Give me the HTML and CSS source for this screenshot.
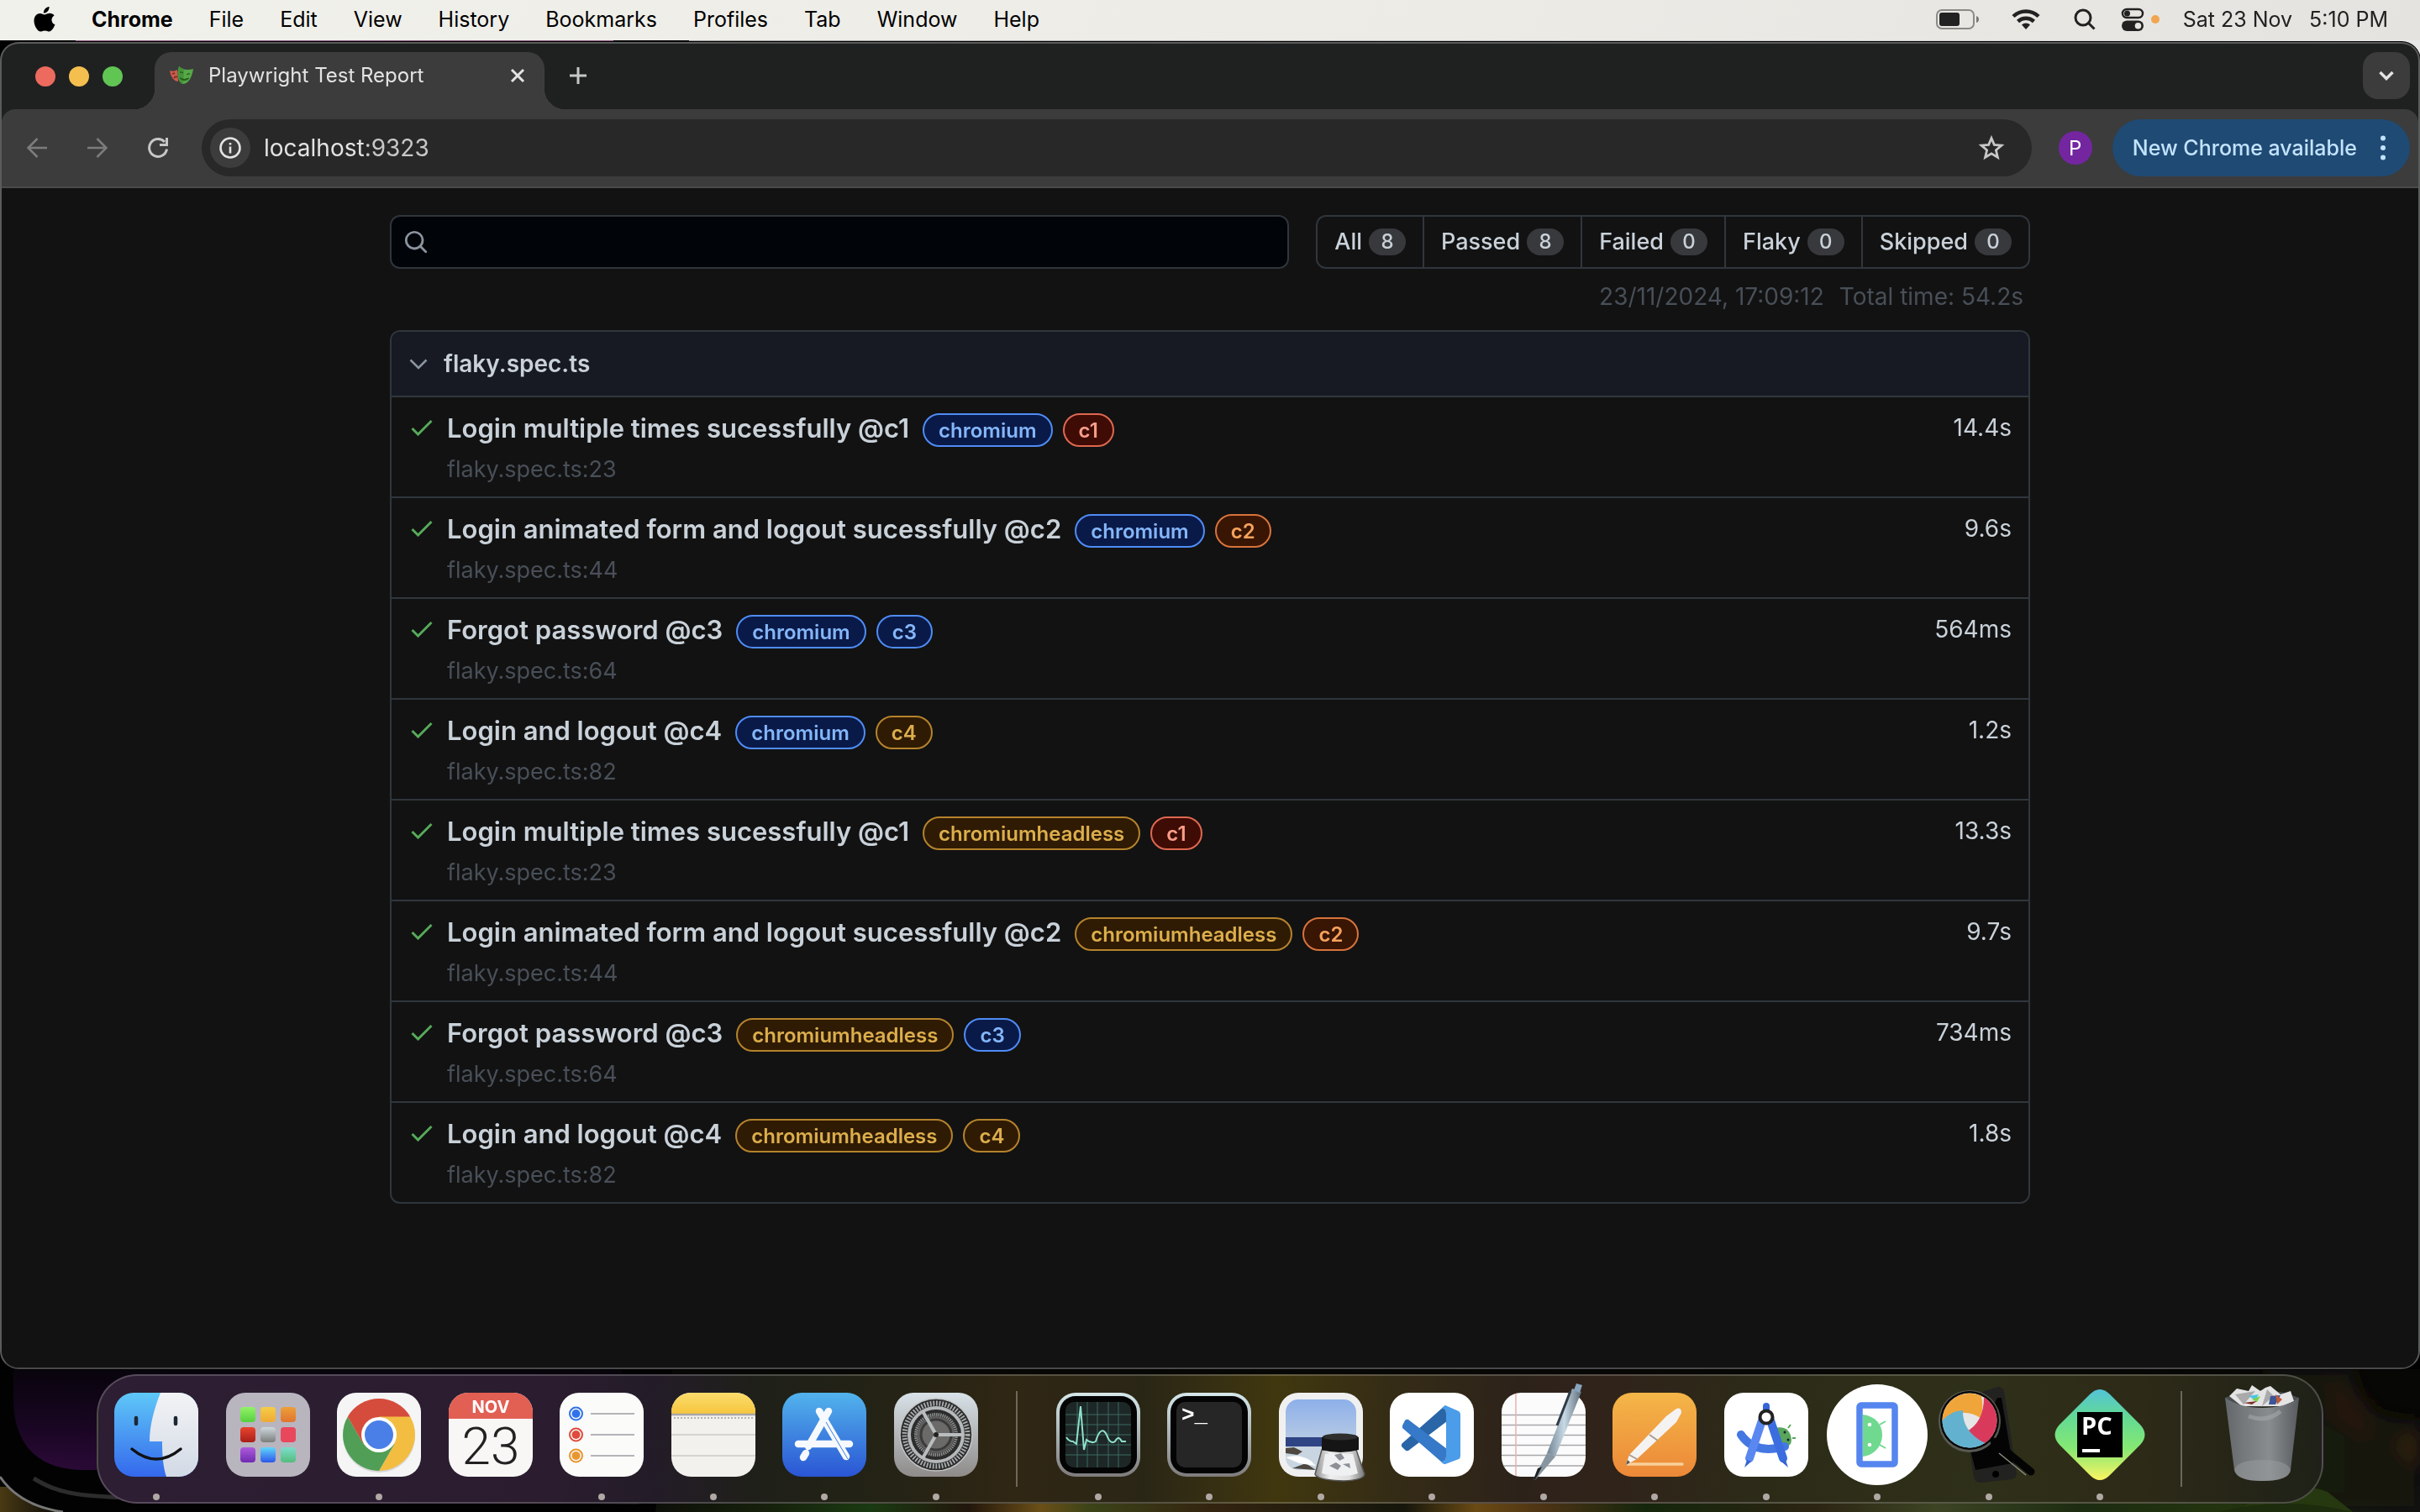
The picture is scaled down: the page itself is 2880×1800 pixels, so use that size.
FILE: index.html
```html
<!DOCTYPE html>
<html lang="en">
<head>
<meta charset="utf-8">
<title>Playwright Test Report</title>
<link rel="stylesheet" href="styles.css">
</head>
<body>
<div class="wallpaper" aria-hidden="true">
  <svg class="wallpaper-bottom" viewBox="0 0 2880 170" preserveAspectRatio="none">
    <defs>
      <linearGradient id="forest"><stop offset="0" stop-color="#4a3a14"/><stop offset=".02" stop-color="#15120a"/><stop offset=".27" stop-color="#0d0f08"/><stop offset=".32" stop-color="#16220c"/><stop offset=".36" stop-color="#1a3a12"/><stop offset=".4" stop-color="#22160c"/><stop offset=".43" stop-color="#6b4f18"/><stop offset=".45" stop-color="#3c4418"/><stop offset=".5" stop-color="#33240f"/><stop offset=".58" stop-color="#15160c"/><stop offset=".61" stop-color="#6a4a14"/><stop offset=".64" stop-color="#4a3214"/><stop offset=".68" stop-color="#14260c"/><stop offset=".75" stop-color="#2c2412"/><stop offset=".8" stop-color="#3c4424"/><stop offset=".86" stop-color="#1c2c10"/><stop offset=".92" stop-color="#22340f"/><stop offset="1" stop-color="#0c0c0a"/></linearGradient>
      <radialGradient id="plum" cx=".05" cy="1" r="1"><stop offset="0" stop-color="#2c0a38"/><stop offset=".4" stop-color="#1a0624"/><stop offset="1" stop-color="#08040c"/></radialGradient>
      <filter id="soft"><feGaussianBlur stdDeviation="10"/></filter>
    </defs>
    <rect width="2880" height="170" fill="#070706"/>
    <rect y="140" width="2880" height="30" fill="url(#forest)"/>
    <path d="M0 0H800L780 170H75C40 165 15 150 0 128Z" fill="#020202"/>
    <path d="M0 128C15 150 40 165 75 170" fill="none" stroke="#777" stroke-width="3"/>
    <path d="M40 130C70 148 90 153 200 154L760 158" fill="none" stroke="#2c2c2c" stroke-width="5"/>
    <path d="M16 0V40C18 95 50 120 100 120H740V0Z" fill="url(#plum)"/>
    <g filter="url(#soft)">
      <path d="M2700 0H2800C2810 40 2820 60 2880 60V170H2700Z" fill="#171408"/>
      <path d="M2755 60L2790 80L2790 150L2740 140Z" fill="#151c08"/>
      <path d="M2770 10L2820 40L2820 90L2775 60Z" fill="#221608"/>
      <path d="M2850 90L2880 70V120Z" fill="#30200c"/>
    </g>
    <path d="M2660 170Q2720 128 2770 146L2800 170Z" fill="#26380f"/>
    <path d="M2640 170Q2720 150 2800 170Z" fill="#1c2c0c"/>
  </svg>
</div>

<header class="menubar">
  <nav class="menus" aria-label="Menu bar">
    <button class="apple" aria-label="Apple menu"><svg width="26" height="32" viewBox="0 0 26 32"><path d="M18.6 1c.2 2-.6 3.900-1.800 5.300-1.200 1.400-3.100 2.400-4.900 2.300-.2-1.900.7-3.900 1.800-5.100C14.900 2.100 17 1.100 18.600 1zM24.600 11.500c-2 1.200-3.100 3-3.100 5.200 0 2.600 1.600 4.700 4 5.600-.9 2.500-3.700 8.200-7 8.200-1.800 0-2.700-1.100-5.100-1.100-2.500 0-3.400 1.100-5.100 1.100C4.700 30.500.5 23.600.5 17.700c0-5.700 3.500-8.800 7.100-8.800 2.300 0 4.200 1.500 5.600 1.500 1.300 0 3.500-1.600 6.200-1.600 2.100 0 4 .9 5.200 2.700z"/></svg></button>
    <button class="app-name">Chrome</button>
    <button>File</button><button>Edit</button><button>View</button><button>History</button><button>Bookmarks</button><button>Profiles</button><button>Tab</button><button>Window</button><button>Help</button>
  </nav>
  <div class="status">
    <svg class="battery" width="52" height="24" viewBox="0 0 52 24"><rect x="1" y="1" width="44" height="22" rx="6" fill="none" stroke="#8b8a87" stroke-width="2"/><rect x="4" y="4" width="24" height="16" rx="3" fill="#222"/><path d="M48 8q3 1 3 4t-3 4z" fill="#777"/></svg>
    <svg class="wifi" width="34" height="26" viewBox="0 0 34 26"><g fill="none" stroke="#222" stroke-width="4.500"><path d="M2 9.500A21.500 21.500 0 0 1 32 9.500"/><path d="M7.500 15.500A14 14 0 0 1 26.500 15.500"/></g><path d="M17 25l-5-5.500a7.500 7.500 0 0 1 10 0z" fill="#222"/></svg>
    <svg class="find" width="26" height="26" viewBox="0 0 26 26" fill="none" stroke="#222" stroke-width="3"><circle cx="11" cy="11" r="9"/><path d="M17.500 17.500L24.500 24.500"/></svg>
    <svg class="control" width="28" height="28" viewBox="0 0 28 28"><rect x="2" y="2" width="24" height="10" rx="5" fill="none" stroke="#222" stroke-width="2.500"/><circle cx="7.500" cy="7" r="3.500" fill="#222"/><rect x="1" y="15.500" width="26" height="12.500" rx="6.200" fill="#222"/><circle cx="20.500" cy="21.700" r="3.800" fill="#e6e5e1"/></svg>
    <span class="mic-dot"></span>
    <time class="clock"><span>Sat 23 Nov</span><span>5:10 PM</span></time>
  </div>
</header>

<div class="window">
  <div class="tabstrip">
    <div class="lights"><button class="light red" aria-label="Close"></button><button class="light amber" aria-label="Minimise"></button><button class="light green" aria-label="Zoom"></button></div>
    <div class="tab">
      <svg width="28" height="22" viewBox="0 0 28 22"><path d="M0 5c3 1 6 1 9-1l1 14c-5 0-9-6-10-13z" fill="#cd5a4b"/><path d="M3 9l3-1M5 14q2-3 4-1" stroke="#6b2a24" fill="none" stroke-width="1.500"/><path d="M11 0c4 4 10 5 17 3-1 9-6 18-12 18-6-1-8-12-5-21z" fill="#57a847"/><path d="M11 0c2 2 4 3 6 3l-1 18c-6-1-8-12-5-21z" fill="#47913a"/><path d="M12 7q2-1 4 1M20 10q2-2 4-1M12 14q5 3 11 0q-5 5-11 0z" stroke="#1f5a1c" fill="#1f5a1c" stroke-width="1"/></svg>
      <span class="tab-title">Playwright Test Report</span>
      <button class="tab-close" aria-label="Close tab"><svg width="18" height="18" viewBox="0 0 18 18" stroke="#e3e3e3" stroke-width="3"><path d="M2 2L16 16M16 2L2 16"/></svg></button>
    </div>
    <button class="new-tab" aria-label="New tab"><svg width="20" height="20" viewBox="0 0 20 20" stroke="#c7c7c7" stroke-width="3"><path d="M10 0V20M0 10H20"/></svg></button>
    <button class="tab-search" aria-label="Search tabs"><svg width="18" height="12" viewBox="0 0 18 12" fill="none" stroke="#e3e3e3" stroke-width="3.500"><path d="M1.500 2L9 9.500L16.500 2"/></svg></button>
  </div>
  <div class="toolbar">
    <div class="nav-buttons">
      <button aria-label="Back"><svg width="24" height="24" viewBox="0 0 24 24" fill="none" stroke="#7c7c7c" stroke-width="2.600"><path d="M24 12H2M12.500 1L1.500 12L12.500 23"/></svg></button>
      <button aria-label="Forward"><svg width="24" height="24" viewBox="0 0 24 24" fill="none" stroke="#7c7c7c" stroke-width="2.600"><path d="M0 12H22M11.500 1L22.500 12L11.500 23"/></svg></button>
      <button aria-label="Reload"><svg width="24" height="24" viewBox="0 0 24 24"><path d="M22.500 13.500A10.500 10.500 0 1 1 20 5" fill="none" stroke="#c7c7c7" stroke-width="3"/><path d="M24 0V10H14V7H21V0z" fill="#c7c7c7"/></svg></button>
    </div>
    <div class="urlbar">
      <button class="site-info" aria-label="View site information"><svg width="26" height="26" viewBox="0 0 26 26" fill="none" stroke="#e3e3e3" stroke-width="2.600"><circle cx="13" cy="13" r="11.500"/><path d="M13 11.500V19.500M13 7V9.600"/></svg></button>
      <a class="url" href="http://localhost:9323">localhost<span>:9323</span></a>
      <button class="star" aria-label="Bookmark this tab"><svg width="32" height="32" viewBox="0 0 32 32" fill="none" stroke="#c7c7c7" stroke-width="2.800"><path d="M16 4.500L19.300 12.400L28 13.100L21.400 18.800L23.400 27.300L16 22.800L8.600 27.300L10.600 18.800L4 13.100L12.700 12.400Z"/></svg></button>
    </div>
    <button class="avatar">P</button>
    <button class="update">New Chrome available<svg width="6" height="30" viewBox="0 0 6 30" fill="#c2e3ff"><circle cx="3" cy="3.500" r="3"/><circle cx="3" cy="15" r="3"/><circle cx="3" cy="26.500" r="3"/></svg></button>
  </div>

  <main class="page">
    <div class="report">
      <div class="report-top">
        <label class="search">
          <svg width="30" height="30" viewBox="0 0 16 16" fill="#8b949e"><path d="M10.680 11.740a6 6 0 0 1-7.922-8.982 6 6 0 0 1 8.982 7.922l3.040 3.040a.749.749 0 0 1-1.060 1.060ZM11.500 7a4.499 4.499 0 1 0-8.997 0A4.499 4.499 0 0 0 11.500 7Z"/></svg>
          <input type="search" aria-label="Search tests">
        </label>
        <nav class="filters" aria-label="Test status">
          <a href="#all">All<span class="counter">8</span></a>
          <a href="#passed">Passed<span class="counter">8</span></a>
          <a href="#failed">Failed<span class="counter">0</span></a>
          <a href="#flaky">Flaky<span class="counter">0</span></a>
          <a href="#skipped">Skipped<span class="counter">0</span></a>
        </nav>
      </div>
      <div class="stats"><span>23/11/2024, 17:09:12</span><span>Total time: 54.2s</span></div>

      <section class="chip">
        <button class="chip-header"><svg width="24" height="24" viewBox="0 0 24 24" fill="none" stroke="#8b949e" stroke-width="2.600"><path d="M2.500 7.500L12 17L21.500 7.500"/></svg>flaky.spec.ts</button>
        <ul class="tests">
          <li class="test"><svg class="check" viewBox="0 0 26 20"><path d="M1.500 11L8.500 18L24.500 2"/></svg><div class="test-body"><div class="test-title"><a href="#t1">Login multiple times sucessfully @c1</a><span class="label blue">chromium</span><span class="label red-label">c1</span></div><a class="path" href="#t1">flaky.spec.ts:23</a></div><span class="duration">14.4s</span></li>
          <li class="test"><svg class="check" viewBox="0 0 26 20"><path d="M1.500 11L8.500 18L24.500 2"/></svg><div class="test-body"><div class="test-title"><a href="#t2">Login animated form and logout sucessfully @c2</a><span class="label blue">chromium</span><span class="label orange">c2</span></div><a class="path" href="#t2">flaky.spec.ts:44</a></div><span class="duration">9.6s</span></li>
          <li class="test"><svg class="check" viewBox="0 0 26 20"><path d="M1.500 11L8.500 18L24.500 2"/></svg><div class="test-body"><div class="test-title"><a href="#t3">Forgot password @c3</a><span class="label blue">chromium</span><span class="label blue">c3</span></div><a class="path" href="#t3">flaky.spec.ts:64</a></div><span class="duration">564ms</span></li>
          <li class="test"><svg class="check" viewBox="0 0 26 20"><path d="M1.500 11L8.500 18L24.500 2"/></svg><div class="test-body"><div class="test-title"><a href="#t4">Login and logout @c4</a><span class="label blue">chromium</span><span class="label yellow">c4</span></div><a class="path" href="#t4">flaky.spec.ts:82</a></div><span class="duration">1.2s</span></li>
          <li class="test"><svg class="check" viewBox="0 0 26 20"><path d="M1.500 11L8.500 18L24.500 2"/></svg><div class="test-body"><div class="test-title"><a href="#t5">Login multiple times sucessfully @c1</a><span class="label yellow">chromiumheadless</span><span class="label red-label">c1</span></div><a class="path" href="#t5">flaky.spec.ts:23</a></div><span class="duration">13.3s</span></li>
          <li class="test"><svg class="check" viewBox="0 0 26 20"><path d="M1.500 11L8.500 18L24.500 2"/></svg><div class="test-body"><div class="test-title"><a href="#t6">Login animated form and logout sucessfully @c2</a><span class="label yellow">chromiumheadless</span><span class="label orange">c2</span></div><a class="path" href="#t6">flaky.spec.ts:44</a></div><span class="duration">9.7s</span></li>
          <li class="test"><svg class="check" viewBox="0 0 26 20"><path d="M1.500 11L8.500 18L24.500 2"/></svg><div class="test-body"><div class="test-title"><a href="#t7">Forgot password @c3</a><span class="label yellow">chromiumheadless</span><span class="label blue">c3</span></div><a class="path" href="#t7">flaky.spec.ts:64</a></div><span class="duration">734ms</span></li>
          <li class="test"><svg class="check" viewBox="0 0 26 20"><path d="M1.500 11L8.500 18L24.500 2"/></svg><div class="test-body"><div class="test-title"><a href="#t8">Login and logout @c4</a><span class="label yellow">chromiumheadless</span><span class="label yellow">c4</span></div><a class="path" href="#t8">flaky.spec.ts:82</a></div><span class="duration">1.8s</span></li>
        </ul>
      </section>
    </div>
  </main>
</div>

<footer class="dock">
  <button class="app running" aria-label="Finder"><svg viewBox="0 0 132 132">
    <defs><linearGradient id="fb" x2="0" y2="1"><stop stop-color="#5fc8f8"/><stop offset="1" stop-color="#3468ec"/></linearGradient><linearGradient id="fw" x2="0" y2="1"><stop stop-color="#f3f3f5"/><stop offset="1" stop-color="#d2dae6"/></linearGradient><clipPath id="tile"><rect x="16" y="16" width="100" height="100" rx="23"/></clipPath></defs>
    <g clip-path="url(#tile)"><rect x="16" y="16" width="100" height="100" fill="url(#fb)"/><path d="M71 16C64 34 58 54 58 74H73C73 90 74 104 78 116H116V16Z" fill="url(#fw)"/></g>
    <path d="M42 46V53M89 46V53" stroke="#1c2733" stroke-width="4.500" stroke-linecap="round"/><path d="M37 83Q66 107 95 83" fill="none" stroke="#111" stroke-width="3.500" stroke-linecap="round"/></svg></button>
  <button class="app" aria-label="Launchpad"><svg viewBox="0 0 132 132">
    <defs><linearGradient id="l1" x2="0" y2="1"><stop stop-color="#93f268"/><stop offset="1" stop-color="#56d03e"/></linearGradient><linearGradient id="l2" x2="0" y2="1"><stop stop-color="#f5cd46"/><stop offset="1" stop-color="#efa936"/></linearGradient><linearGradient id="l3" x2="0" y2="1"><stop stop-color="#eca03a"/><stop offset="1" stop-color="#e0742f"/></linearGradient><linearGradient id="l4" x2="0" y2="1"><stop stop-color="#e9442f"/><stop offset="1" stop-color="#a81f18"/></linearGradient><linearGradient id="l5" x2="0" y2="1"><stop stop-color="#cfd8dd"/><stop offset="1" stop-color="#7a7d7b"/></linearGradient><linearGradient id="l7" x2="0" y2="1"><stop stop-color="#ae5bdc"/><stop offset="1" stop-color="#6f2bb0"/></linearGradient><linearGradient id="l8" x2="0" y2="1"><stop stop-color="#5fd7fa"/><stop offset="1" stop-color="#2e55ea"/></linearGradient><linearGradient id="l9" x2="0" y2="1"><stop stop-color="#7fdccb"/><stop offset="1" stop-color="#52bd7c"/></linearGradient></defs>
    <rect x="16" y="16" width="100" height="100" rx="23" fill="#b8b5bf"/>
    <rect x="33" y="33" width="18" height="18" rx="4" fill="url(#l1)"/><rect x="57" y="33" width="18" height="18" rx="4" fill="url(#l2)"/><rect x="81" y="33" width="18" height="18" rx="4" fill="url(#l3)"/>
    <rect x="33" y="57" width="18" height="18" rx="4" fill="url(#l4)"/><rect x="57" y="57" width="18" height="18" rx="4" fill="url(#l5)"/><rect x="81" y="57" width="18" height="18" rx="4" fill="#e9475c"/>
    <rect x="33" y="81" width="18" height="18" rx="4" fill="url(#l7)"/><rect x="57" y="81" width="18" height="18" rx="4" fill="url(#l8)"/><rect x="81" y="81" width="18" height="18" rx="4" fill="url(#l9)"/></svg></button>
  <button class="app running" aria-label="Google Chrome"><svg viewBox="0 0 132 132">
    <rect x="16" y="16" width="100" height="100" rx="23" fill="#f5f5f6"/><circle cx="66" cy="68" r="43" fill="#bbb" opacity=".5"/>
    <path d="M66 66L28.800 44.500A43 43 0 0 1 103.200 44.500Z" fill="#d64c3c"/><path d="M66 44.500H103.200A43 43 0 0 1 66 109L84.600 76.700Z" fill="#f3bd42"/><path d="M28.800 44.500A43 43 0 0 0 66 109L84.600 76.700L47.400 76.700Z" fill="#519e57"/><path d="M28.800 44.500L47.400 76.700L66 44.500Z" fill="#d64c3c"/>
    <circle cx="66" cy="66" r="21" fill="#fff"/><circle cx="66" cy="66" r="17" fill="#4a7fe8"/></svg></button>
  <button class="app" aria-label="Calendar"><svg viewBox="0 0 132 132">
    <g clip-path="url(#tile)"><rect x="16" y="16" width="100" height="100" fill="#f8f7f5"/><rect x="16" y="16" width="100" height="31" fill="#e25f54"/></g>
    <text class="cal-month" x="66" y="40">NOV</text><text class="cal-day" x="66" y="101">23</text></svg></button>
  <button class="app running" aria-label="Reminders"><svg viewBox="0 0 132 132">
    <rect x="16" y="16" width="100" height="100" rx="23" fill="#fbfbfa"/><g stroke="#b4b3b8" stroke-width="2"><path d="M53 41H105M53 66H105M53 91H105"/></g>
    <g fill="none" stroke-width="2"><circle cx="35.500" cy="41" r="7.500" stroke="#2f72ea"/><circle cx="35.500" cy="66" r="7.500" stroke="#df4b3c"/><circle cx="35.500" cy="91" r="7.500" stroke="#e8962f"/></g><circle cx="35.500" cy="41" r="5" fill="#2f72ea"/><circle cx="35.500" cy="66" r="5" fill="#df4b3c"/><circle cx="35.500" cy="91" r="5" fill="#e8962f"/></svg></button>
  <button class="app running" aria-label="Notes"><svg viewBox="0 0 132 132">
    <defs><linearGradient id="nt" x2="0" y2="1"><stop stop-color="#fbdc6c"/><stop offset="1" stop-color="#f6c63e"/></linearGradient></defs>
    <g clip-path="url(#tile)"><rect x="16" y="16" width="100" height="100" fill="#f2f1ee"/><rect x="16" y="16" width="100" height="25" fill="url(#nt)"/><path d="M16 42H116" stroke="#a9a6a8" stroke-width="2.500"/><path d="M19 46H114" stroke="#b5b2ae" stroke-width="2" stroke-dasharray="2 2"/><path d="M16 66H116M16 91H116" stroke="#d6d4d1" stroke-width="2"/></g></svg></button>
  <button class="app running" aria-label="App Store"><svg viewBox="0 0 132 132">
    <defs><linearGradient id="as" x2="0" y2="1"><stop stop-color="#52b3ec"/><stop offset="1" stop-color="#2a55d4"/></linearGradient></defs>
    <rect x="16" y="16" width="100" height="100" rx="23" fill="url(#as)"/><g stroke="#f6f9fd" stroke-width="8.500" stroke-linecap="round"><path d="M60 38L92 92M35 77H96"/><path d="M71 38L47 80M44 88L41 93"/></g><path d="M68 51L94 95" stroke="#3f7fdf" stroke-width="1"/></svg></button>
  <button class="app running" aria-label="System Settings"><svg viewBox="0 0 132 132">
    <defs><linearGradient id="ss" x2="0" y2="1"><stop stop-color="#d8e2e8"/><stop offset="1" stop-color="#8e8b89"/></linearGradient></defs>
    <rect x="16" y="16" width="100" height="100" rx="23" fill="url(#ss)"/><circle cx="66" cy="66" r="43" fill="#2c2c2c"/><circle cx="66" cy="66" r="37.500" fill="none" stroke="#a9adae" stroke-width="6" stroke-dasharray="1.800 1.800"/><circle cx="66" cy="66" r="32" fill="none" stroke="#b5b9ba" stroke-width="4"/><circle cx="66" cy="66" r="22" fill="#5f5f5d"/><circle cx="66" cy="66" r="24" fill="none" stroke="#8d8f8f" stroke-width="4" stroke-dasharray="1.500 1"/><circle cx="66" cy="66" r="18" fill="#6b6a68" stroke="#3b3b3b" stroke-width="3"/><path d="M66 66H98M66 66L50 38M66 66L50 94" stroke="#b9bdbe" stroke-width="4"/><circle cx="66" cy="66" r="3" fill="#222"/><circle cx="66" cy="66" r="43" fill="none" stroke="#c3c5c5" stroke-width="1.500"/></svg></button>
  <span class="divider"></span>
  <button class="app running" aria-label="Activity Monitor"><svg viewBox="0 0 132 132">
    <defs><linearGradient id="rim" x2="0" y2="1"><stop stop-color="#d5e8ea"/><stop offset="1" stop-color="#7e7b7b"/></linearGradient></defs>
    <rect x="16" y="16" width="100" height="100" rx="23" fill="url(#rim)"/><rect x="20" y="20" width="92" height="92" rx="19" fill="#040404"/><rect x="27" y="27" width="78" height="78" rx="10" fill="#1d2726"/>
    <path d="M41 27V105M53 27V105M65 27V105M78 27V105M90 27V105M27 42H105M27 54H105M27 66H105M27 78H105M27 90H105" stroke="#3c6a60" stroke-width="1"/><path d="M28 69Q31 74 36 74L40 77L45 32L49 84L52 72Q58 77 63 74C67 60 72 58 76 66Q80 78 86 74Q90 66 94 74H99" fill="none" stroke="#8fe0cc" stroke-width="2"/></svg></button>
  <button class="app running" aria-label="Terminal"><svg viewBox="0 0 132 132">
    <rect x="16" y="16" width="100" height="100" rx="23" fill="url(#rim)"/><rect x="20" y="20" width="92" height="92" rx="19" fill="#040404"/><rect x="27" y="27" width="78" height="78" rx="10" fill="#262626"/><text class="prompt" x="33" y="50">&gt;_</text></svg></button>
  <button class="app running" aria-label="Preview"><svg viewBox="0 0 132 132">
    <defs><linearGradient id="sky" x2="0" y2="1"><stop stop-color="#8db0ea"/><stop offset="1" stop-color="#b4c8e4"/></linearGradient><linearGradient id="jar"><stop stop-color="#8d8d8d"/><stop offset=".3" stop-color="#eee"/><stop offset=".7" stop-color="#ddd"/><stop offset="1" stop-color="#777"/></linearGradient><clipPath id="photo"><rect x="24" y="24" width="84" height="84" rx="15"/></clipPath></defs>
    <rect x="16" y="16" width="100" height="100" rx="23" fill="#f0f0f0"/><g clip-path="url(#photo)"><rect x="24" y="24" width="84" height="46" fill="url(#sky)"/><rect x="24" y="69" width="84" height="12" fill="#2f4484"/><rect x="24" y="80" width="84" height="30" fill="#c9d6e2"/><path d="M24 82L34 81L44 86L38 90L24 88ZM32 106L48 100L60 108Z" fill="#4e4840"/><path d="M24 93Q40 88 54 97L60 103L40 100Z" fill="#fff"/></g>
    <path d="M67 84H108L118 113Q117 120 93 121Q62 120 59 113Z" fill="url(#jar)" stroke="#555" stroke-width="1.500"/><path d="M71 89H104L110 112Q92 118 67 112Z" fill="#eef0f2"/><path d="M82 90l8-2 4 6-6 3zM76 103l8-4 6 4-4 5zM92 101l8-1 1 6z" fill="#8c8f96"/><path d="M67 69Q89 61 111 69V84Q89 90 67 84Z" fill="#151515"/><ellipse cx="89" cy="68.500" rx="21" ry="4" fill="#2e2e2e"/></svg></button>
  <button class="app running" aria-label="Visual Studio Code"><svg viewBox="0 0 132 132">
    <rect x="16" y="16" width="100" height="100" rx="23" fill="#fff"/><path d="M82 31L84 50L38 85Q36 86 34 84L30 80Q29 78 31 76Z" fill="#2a65a8"/><path d="M31 55L34 49Q36 47 38 48L84 83L82 101Q79 101 77 98L31 58Z" fill="#3579c8"/><path d="M82 31L98 38Q100 39 100 42V91Q100 94 98 95L82 101Q79 101 78 98L83 95V37L78 34Z" fill="#4b9ce9"/></svg></button>
  <button class="app running" aria-label="TextEdit"><svg viewBox="0 0 132 132">
    <defs><linearGradient id="pen"><stop stop-color="#6f8291"/><stop offset=".5" stop-color="#c8d9e6"/><stop offset="1" stop-color="#5d6d78"/></linearGradient></defs>
    <g clip-path="url(#tile)"><rect x="16" y="16" width="100" height="100" fill="#fbfbfb"/><path d="M16 42.500H116M16 54.500H116M16 66.500H116M16 78.500H116M16 90.500H116M16 103H116" stroke="#a8a8aa" stroke-width="1.500"/><path d="M33 16V116" stroke="#edb1b1" stroke-width="1.500"/></g>
    <path d="M100 11L111 15L80 92L70 88Z" fill="url(#pen)"/><path d="M105 5L112 7L109 16L102 13Z" fill="#88a3bd"/><path d="M70 88L80 92L56 120L54 119Z" fill="#8796a0"/><path d="M64 104L56 120L54 119L59 106Z" fill="#222"/><path d="M98 14L82 55" stroke="#2f3c46" stroke-width="3"/></svg></button>
  <button class="app running" aria-label="Pages"><svg viewBox="0 0 132 132">
    <defs><linearGradient id="pg" x2="0" y2="1"><stop stop-color="#f4b648"/><stop offset="1" stop-color="#ec8838"/></linearGradient></defs>
    <rect x="16" y="16" width="100" height="100" rx="23" fill="url(#pg)"/><path d="M34 101H99" stroke="#f9cf9a" stroke-width="3.500" stroke-linecap="round"/><path d="M92 35Q98 33 98 40L92 51L45 95L32 102L36 90L80 44Z" fill="#f5f3f1"/><path d="M60 66L70 73M36 90L45 95" stroke="#a89c92" stroke-width="2"/><path d="M32 102L34 96L37 99Z" fill="#555"/></svg></button>
  <button class="app running" aria-label="Android Studio"><svg viewBox="0 0 132 132">
    <rect x="16" y="16" width="100" height="100" rx="23" fill="#fff"/><path d="M76 58Q94 54 96 72Q96 80 88 80L80 72Z" fill="#58a55b"/><path d="M92 58L95 54M97 70H101" stroke="#58a55b" stroke-width="2"/><circle cx="88" cy="63" r="1.500" fill="#123"/><circle cx="92" cy="72" r="1.500" fill="#123"/>
    <path d="M36 66Q52 90 88 80" fill="none" stroke="#4577e3" stroke-width="10" stroke-linecap="round"/><path d="M66 32V40" stroke="#3666d8" stroke-width="8" stroke-linecap="round"/><path d="M62 46L46 94" stroke="#5a88f0" stroke-width="10" stroke-linecap="round"/><path d="M70 46L86 94" stroke="#3b6de0" stroke-width="10" stroke-linecap="round"/><path d="M43 96L40 105L48 98ZM89 96L92 105L84 98Z" fill="#3464cf"/><circle cx="66" cy="45" r="7.500" fill="#fff" stroke="#222" stroke-width="4"/></svg></button>
  <button class="app running" aria-label="Android Device"><svg viewBox="0 0 132 132">
    <circle cx="66" cy="66" r="60" fill="#fff"/><rect x="45" y="31" width="42" height="70" rx="2" fill="#fff" stroke="#5585ee" stroke-width="7.500"/><path d="M49 42C64 44 72 54 72 66S64 90 49 92Z" fill="#6fd98f"/><path d="M69 54L76 50M69 78L76 82" stroke="#6fd98f" stroke-width="2"/><circle cx="57" cy="54" r="2.300" fill="#fff"/><circle cx="57" cy="78" r="2.300" fill="#fff"/></svg></button>
  <button class="app running" aria-label="Device Mirror"><svg viewBox="0 0 132 132">
    <path d="M42 20L77 9Q82 9 84 14L99 112Q99 117 94 119L56 123Q50 123 48 117L34 26Z" fill="#222221"/><path d="M76 22L81 22L94 100L50 108L44 84Z" fill="#040404"/><circle cx="74" cy="113" r="4" fill="#000"/>
    <circle cx="43" cy="50" r="37" fill="#5a5a54"/><circle cx="43" cy="49" r="35" fill="#050505"/><circle cx="43" cy="49" r="32.500" fill="#e6e6e6"/><path d="M10.500 49A32.500 32.500 0 0 1 57 20Q60 34 56 46Q34 32 10.500 49Z" fill="#f0a53a"/><path d="M60 21.300A32.500 32.500 0 0 1 61 76Q50 72 38 63Q60 52 60 21.300Z" fill="#d93a5c"/><path d="M10.500 49Q22 37 35 37Q34 62 61 76A32.500 32.500 0 0 1 10.500 49Z" fill="#62b2cf"/>
    <path d="M72 74L116 110" stroke="#040404" stroke-width="9" stroke-linecap="round"/><path d="M78 88L110 114" stroke="#8d8d82" stroke-width="1.500"/></svg></button>
  <button class="app running" aria-label="PyCharm"><svg viewBox="0 0 132 132">
    <defs><linearGradient id="pc" x2="0" y2="1"><stop stop-color="#54c3d8"/><stop offset=".3" stop-color="#62da94"/><stop offset=".65" stop-color="#85e873"/><stop offset="1" stop-color="#fbf562"/></linearGradient></defs>
    <path d="M54 18Q66 6 78 18L114 54Q125 66 114 78L78 114Q66 126 54 114L18 78Q7 66 18 54Z" fill="url(#pc)"/><rect x="39" y="39" width="54" height="54" fill="#000"/><path d="M45 85H66" stroke="#fff" stroke-width="4"/><text class="pycharm-text" x="44" y="66">PC</text></svg></button>
  <span class="divider"></span>
  <button class="app" aria-label="Bin"><svg viewBox="0 0 132 132">
    <defs><linearGradient id="bin"><stop stop-color="#666a6e"/><stop offset=".25" stop-color="#7a7d80"/><stop offset=".6" stop-color="#909396"/><stop offset="1" stop-color="#5b5f63"/></linearGradient></defs>
    <path d="M22 22Q66 4 110 22Q110 32 66 33Q22 32 22 22Z" fill="#4b4e50"/><path d="M27 20L36 11L50 14L54 7L64 14L70 10L76 8L88 18L100 14L104 26L90 32L42 32Z" fill="#e4e4e4"/><path d="M34 18L44 30L58 14ZM72 12L66 32L80 20Z" fill="#aaa"/><path d="M50 20L62 18L58 25Z" fill="#4ac6e0"/><path d="M54 24L64 20L60 27Z" fill="#7bd34a"/><path d="M76 20L88 19L82 30L74 30Z" fill="#3d5698"/><path d="M82 18L90 24L84 30Z" fill="#bf5a3a"/><path d="M44 28L54 30L60 26Z" fill="#7d302a"/>
    <path d="M22 22Q40 34 66 34Q94 34 110 22L100 108Q98 121 66 121Q36 121 33 108Z" fill="url(#bin)" opacity=".95"/><path d="M33 108Q36 96 66 96Q96 96 100 108Q98 121 66 121Q36 121 33 108Z" fill="#9a9da0" opacity=".5"/><path d="M50 44Q72 52 88 38" fill="none" stroke="#a5a8aa" stroke-width="5" opacity=".6"/></svg></button>
</footer>
</body>
</html>
```
FILE: styles.css
```css
* { box-sizing: border-box; }

body {
  margin: 0;
  min-height: 100vh;
  display: flex;
  flex-direction: column;
  background: #000;
  font-family: Inter, "Liberation Sans", sans-serif;
}

button {
  margin: 0;
  padding: 0;
  border: 0;
  background: none;
  color: inherit;
  font: inherit;
  display: flex;
  align-items: center;
  justify-content: center;
}

a { color: inherit; text-decoration: none; }
svg { display: block; flex: none; }

.wallpaper {
  position: fixed;
  inset: 0;
  z-index: -1;
  background: linear-gradient(90deg, #000 90px, #8a5a80 90px, #8a5a80 730px, #000 730px, #000 820px, #9a9a98 820px, #e8e8e8) top / 100% 80px no-repeat, #000;
}
.wallpaper-bottom { position: absolute; bottom: 0; width: 100%; height: 170px; }

/* Menu bar */
.menubar {
  height: 48px;
  display: flex;
  justify-content: space-between;
  align-items: center;
  padding: 0 38px 2px 40px;
  background: linear-gradient(90deg, #f1f1ec, #ecebe6 60%, #e4e3df);
  color: #000;
  font-size: 25px;
  line-height: 32px;
}
.menus { display: flex; align-items: center; gap: 43px; }
.app-name { font-weight: 700; }
.status { display: flex; align-items: center; color: #222; }
.battery { margin-right: 38px; }
.wifi { margin-right: 40px; }
.find { margin-right: 30px; }
.control { margin-right: 8px; }
.mic-dot { width: 10px; height: 10px; border-radius: 50%; background: #f0a550; margin-right: 28px; }
.clock { display: flex; gap: 20px; }

/* Browser window */
.window {
  flex: 1;
  margin-top: 2px;
  display: flex;
  flex-direction: column;
  border: 2px solid #5a5c5c;
  border-bottom-color: #4a4a4a;
  border-radius: 22px;
  background: #1f2121;
  box-shadow: 0 0 0 1px #000;
  overflow: hidden;
}
.tabstrip { height: 78px; display: flex; align-items: flex-start; padding: 10px 10px 0 40px; }
.lights { display: flex; gap: 16px; margin: 17px 38px 0 0; }
.light { width: 24px; height: 24px; border-radius: 50%; }
.red { background: #ed6a5e; }
.amber { background: #f5bf4f; }
.green { background: #61c554; }
.tab {
  position: relative;
  width: 464px;
  height: 68px;
  display: flex;
  align-items: center;
  padding: 0 23px 12px 18px;
  border-radius: 20px 20px 0 0;
  background: #3c3c3c;
  color: #e3e3e3;
  font-size: 24px;
  line-height: 32px;
}
.tab::before, .tab::after { content: ""; position: absolute; bottom: 0; width: 24px; height: 24px; }
.tab::before { right: 100%; background: radial-gradient(circle at 0 0, transparent 24px, #3c3c3c 24px); }
.tab::after { left: 100%; background: radial-gradient(circle at 100% 0, transparent 24px, #3c3c3c 24px); }
.tab-title { flex: 1; margin-left: 18px; white-space: nowrap; }
.new-tab { width: 56px; height: 56px; margin-left: 12px; }
.tab-search { width: 56px; height: 56px; margin-left: auto; border-radius: 18px; background: #3c3c3c; }

.toolbar {
  height: 94px;
  display: flex;
  align-items: center;
  padding: 0 10px 0 30px;
  border-bottom: 2px solid #4a4a4a;
  border-radius: 16px 16px 0 0;
  background: #3c3c3c;
}
.nav-buttons { display: flex; gap: 48px; margin-right: 40px; }
.urlbar {
  flex: 1;
  height: 68px;
  display: flex;
  align-items: center;
  padding: 0 32px 0 10px;
  border-radius: 34px;
  background: #282828;
  color: #e3e3e3;
  font-size: 28px;
  line-height: 36px;
}
.site-info { width: 48px; height: 48px; border-radius: 50%; background: #3c3c3c; }
.url { flex: 1; margin-left: 16px; }
.url span { color: #c7c7c7; }
.avatar { width: 40px; height: 40px; margin: 0 24px 0 32px; border-radius: 50%; background: #7326a0; color: #fff; font-size: 24px; }
.update {
  height: 68px;
  gap: 28px;
  padding: 0 29px 0 24px;
  border-radius: 34px;
  background: #1f4a73;
  color: #c2e3ff;
  font-size: 25px;
  font-weight: 500;
  white-space: nowrap;
}

/* Report */
.page { flex: 1; background: #121212; color: #c9d1d9; padding: 32px 24px; font-size: 28px; line-height: 40px; }
.report { max-width: 1952px; margin: 0 auto; }
.report-top { display: flex; gap: 32px; }
.search {
  flex: 1;
  height: 64px;
  display: flex;
  align-items: center;
  gap: 12px;
  padding: 0 14px;
  border: 2px solid #30363d;
  border-radius: 12px;
  background: #010409;
}
.search input { flex: 1; min-width: 0; border: 0; outline: 0; background: none; color: #c9d1d9; font: inherit; }
.filters { height: 64px; display: flex; border: 2px solid #30363d; border-radius: 12px; font-size: 27px; font-weight: 500; }
.filters a { display: flex; align-items: center; gap: 8px; padding: 0 20px; }
.filters a + a { border-left: 2px solid #30363d; }
.counter {
  min-width: 44px;
  padding: 0 12px;
  border-radius: 16px;
  background: #37393d;
  font-size: 24px;
  line-height: 32px;
  text-align: center;
}
.stats { display: flex; justify-content: flex-end; gap: 18px; padding: 13px 8px 20px; color: #484f58; }

.chip { border: 2px solid #30363d; border-radius: 12px; overflow: hidden; }
.chip-header { width: 100%; height: 76px; justify-content: flex-start; gap: 18px; padding: 0 20px; background: #171a22; font-weight: 600; }
.tests { margin: 0; padding: 0; list-style: none; }
.test { height: 120px; display: flex; align-items: flex-start; padding: 15px 20px 0 23px; border-top: 2px solid #30363d; }
.check { width: 26px; height: 20px; margin: 11px 17px 0 0; fill: none; stroke: #57ab5a; stroke-width: 3; }
.test-body { flex: 1; display: flex; flex-direction: column; gap: 7px; }
.test-title { display: flex; align-items: center; gap: 12px; font-size: 31px; font-weight: 600; line-height: 44px; white-space: nowrap; }
.test-title a { margin-right: 4px; }
.label { height: 40px; margin-top: 4px; padding: 0 17px; border: 2px solid; border-radius: 20px; font-size: 24px; line-height: 37px; }
.blue { background: #0a1a48; border-color: #4f8cf6; color: #84b6f9; }
.red-label { background: #3f0b05; border-color: #dd6850; color: #f79d88; }
.orange { background: #391504; border-color: #d8733c; color: #f5a25c; }
.yellow { background: #2f1b04; border-color: #b5832c; color: #dcae4c; }
.path { color: #484f58; font-size: 27px; }
.duration { line-height: 42px; }

/* Dock */
.dock {
  display: flex;
  height: 154px;
  margin: 6px 115px 10px;
  padding: 4px 5px 0 3px;
  border: 2px solid rgba(255, 255, 255, .2);
  border-radius: 48px;
  background: linear-gradient(90deg, #2d1e33 0%, #2b1d2f 20%, #231c28 25%, #1f2018 30%, #242315 36%, #302614 41%, #2a2616 47%, #40370f 53%, #352c16 58%, #2d221a 64%, #30231a 68%, #2c2b18 75%, #2f3019 85%, #2d2a17 92%, #1f2118 100%);
}
.app { flex: 1; flex-direction: column; justify-content: flex-start; min-width: 0; }
.app > svg { width: 132px; height: 132px; }
.running::after { content: ""; width: 8px; height: 8px; margin-top: 4px; border-radius: 50%; background: #b0a8a4; }
.divider { width: 2px; height: 114px; margin: 14px 29px 0; background: rgba(255, 255, 255, .3); }
.cal-month { fill: #fff; font: 700 20px Inter, sans-serif; text-anchor: middle; }
.cal-day { fill: #222; font: 300 62px Roboto, sans-serif; text-anchor: middle; }
.prompt { fill: #fff; font: 700 26px "Liberation Mono", monospace; }
.pycharm-text { fill: #fff; font: 700 29px "Open Sans", sans-serif; }
```
